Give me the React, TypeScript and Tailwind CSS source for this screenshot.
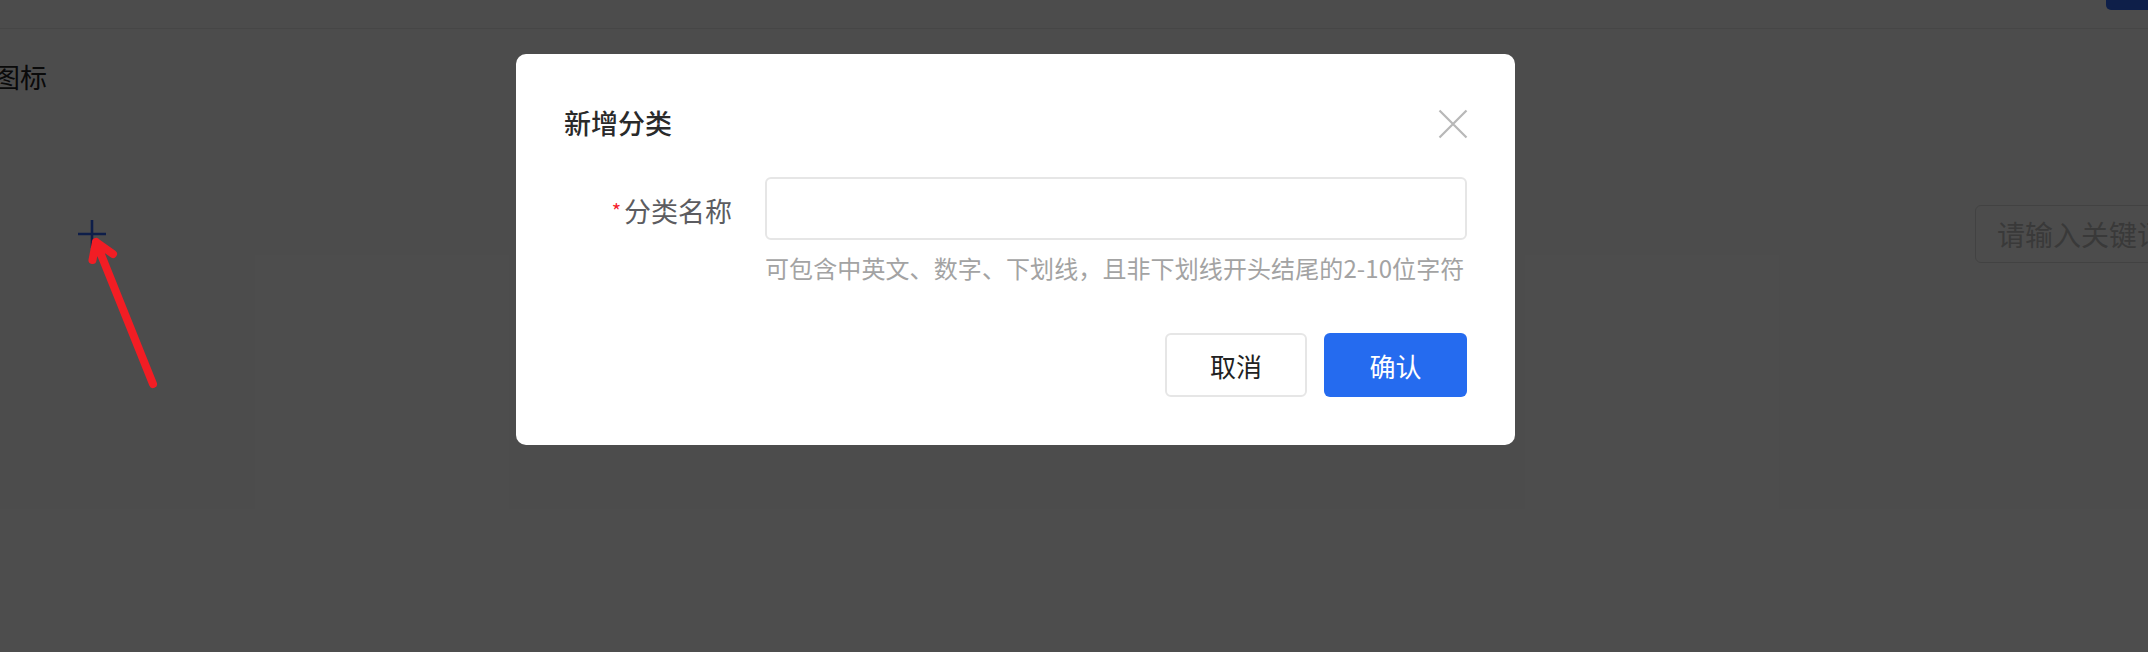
import { useState } from "react";

const cjk = "font-['Noto_Sans_CJK_SC','Noto_Sans',sans-serif]";

function PlusIcon() {
  return (
    <svg width="30" height="30" viewBox="0 0 30 30" fill="none">
      <path d="M15 1v28M1 15h28" stroke="#2f66f6" strokeWidth="2.6" />
    </svg>
  );
}

function CloseIcon() {
  return (
    <svg width="30" height="30" viewBox="0 0 30 30" fill="none">
      <path d="M1.5 1.5l27 27M28.5 1.5l-27 27" stroke="#b8b8b8" strokeWidth="2.2" />
    </svg>
  );
}

export default function App() {
  const [name, setName] = useState("");

  return (
    <div className={`relative h-screen w-screen overflow-hidden bg-white ${cjk}`}>
      {/* Page behind the dialog */}
      <div className="flex h-[29px] items-start justify-end border-b border-[#ececec]">
        <div className="h-[10px] w-[42px] rounded-bl-[5px] bg-[#3068f5]" />
      </div>
      <div className="flex h-[136px] items-start">
        <h1 className="ml-[-7px] mt-[31px] text-[27px] leading-[34px] text-[#222]">图标</h1>
      </div>
      <div className="flex items-start pt-[40px]">
        <button className="ml-[77px] mt-[14px]">
          <PlusIcon />
        </button>
        <div className="ml-auto mr-[-120px] flex h-[58px] w-[293px] items-center rounded-[6px] border border-[#dcdcdc] pl-[21px] text-[28px] text-[#c0c0c0]">
          请输入关键词
        </div>
      </div>

      {/* Dialog overlay */}
      <div className="absolute inset-0 bg-black/70">
        <div className="ml-[516px] mt-[54px] w-[999px] rounded-[10px] bg-white px-[48px] pb-[48px] pt-[52px]">
          <div className="flex items-center justify-between">
            <h2 className="text-[27px] font-medium leading-[34px] text-[#2a2a2a]">新增分类</h2>
            <button className="mr-[-1px] mt-[1px]">
              <CloseIcon />
            </button>
          </div>

          <div className="mt-[37px] flex items-start">
            <label className="flex h-[63px] w-[168px] items-center justify-end pt-[6px] text-[27px] text-[#5c5c60]">
              <span className="mr-[3px] mt-[-2px] text-[20px] leading-none text-[#f5222d]">*</span>
              分类名称
            </label>
            <div className="ml-[33px] flex-1">
              <input
                value={name}
                onChange={(e) => setName(e.target.value)}
                className="h-[63px] w-full rounded-[6px] border-2 border-[#e6e6e6] px-[16px] text-[24px] outline-none"
              />
              <p className="mt-[12px] text-[24px] leading-[32px] tracking-[0.1px] text-[#a3a3a3]">
                可包含中英文、数字、下划线，且非下划线开头结尾的2-10位字符
              </p>
            </div>
          </div>

          <div className="mt-[49px] flex justify-end gap-[17px]">
            <button className="h-[64px] w-[142px] rounded-[6px] border-2 border-[#e6e6e6] bg-white text-[26px] text-[#222]">
              取消
            </button>
            <button className="h-[64px] w-[143px] rounded-[6px] bg-[#256bef] text-[26px] text-white">
              确认
            </button>
          </div>
        </div>
      </div>

      {/* Red annotation arrow */}
      <svg className="pointer-events-none absolute left-0 top-0" width="200" height="400" viewBox="0 0 200 400" fill="none">
        <path
          d="M153 384L96 242M92.5 260L96 242L113 254"
          stroke="#f21d24"
          strokeWidth="8"
          strokeLinecap="round"
          strokeLinejoin="round"
        />
      </svg>
    </div>
  );
}
